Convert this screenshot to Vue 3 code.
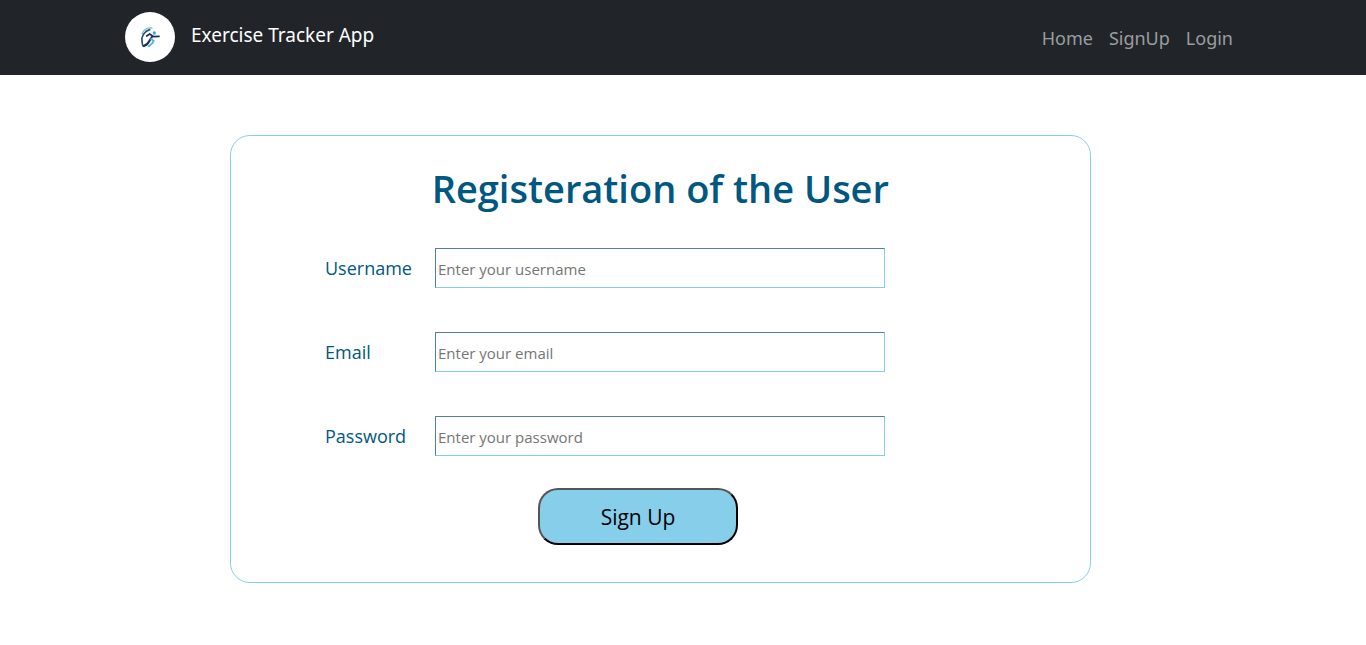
<script setup>
import { reactive } from 'vue'

const links = ['Home', 'SignUp', 'Login']
const fields = [
  { id: 'username', label: 'Username', type: 'text' },
  { id: 'email', label: 'Email', type: 'email' },
  { id: 'password', label: 'Password', type: 'password' },
]
const form = reactive({ username: '', email: '', password: '' })
</script>

<template>
  <header class="navbar">
    <div class="container">
      <a class="brand" href="#">
        <span class="logo">
          <svg viewBox="0 0 60 60" width="20" height="20" fill="none" stroke-linecap="round" aria-hidden="true">
            <path d="M6 20C12 7 23 1 36 3" stroke="#6cc4da" stroke-width="4" />
            <path d="M29 8C14 12 3 28 6 43C7 52 8 57 11 57" stroke="#2f4a75" stroke-width="5" />
            <path d="M11 57C20 54 25 49 28 42L37 28" stroke="#202e58" stroke-width="6" />
            <path d="M20 27L29 21L41 29L57 28" stroke="#202e58" stroke-width="5" />
            <path d="M34 36L41 42C38 50 33 54 26 58" stroke="#55b9d3" stroke-width="6" />
            <circle cx="43" cy="18" r="5" fill="#3fa9c9" />
          </svg>
        </span>
        <span class="brand-name">Exercise Tracker App</span>
      </a>
      <nav class="links">
        <a v-for="link in links" :key="link" href="#">{{ link }}</a>
      </nav>
    </div>
  </header>
  <main class="page">
    <form class="card" @submit.prevent>
      <h1>Registeration of the User</h1>
      <div v-for="field in fields" :key="field.id" class="row">
        <label :for="field.id">{{ field.label }}</label>
        <input :id="field.id" v-model="form[field.id]" :type="field.type" :placeholder="'Enter your ' + field.id" />
      </div>
      <button type="submit">Sign Up</button>
    </form>
  </main>
</template>

<style>
body {
  margin: 0;
  background: #fff;
  font-family: "Segoe UI", "Open Sans", "Noto Sans", sans-serif;
}
</style>

<style scoped>
.navbar {
  background: #212529;
  padding: 12px 0 13px;
}
.container {
  box-sizing: border-box;
  max-width: 1140px;
  margin: 0 auto;
  padding: 0 12px;
  display: flex;
  align-items: center;
  justify-content: space-between;
  font-family: "Segoe UI", "Noto Sans", sans-serif;
}
.brand {
  display: flex;
  align-items: center;
  gap: 16px;
  color: #fff;
  font-size: 19px;
  line-height: 24px;
  text-decoration: none;
}
.brand-name {
  padding-bottom: 4px;
}
.logo {
  display: flex;
  align-items: center;
  justify-content: center;
  width: 50px;
  height: 50px;
  border-radius: 50%;
  background: #fff;
}
.links {
  display: flex;
  gap: 16px;
  padding: 2px 8px 0 0;
}
.links a {
  color: #9b9d9f;
  font-size: 18px;
  line-height: 24px;
  text-decoration: none;
}
.page {
  padding: 60px 0 60px 230px;
}
.card {
  box-sizing: border-box;
  width: 63vw;
  padding: 28px 94px 37px;
  border: 1px solid skyblue;
  border-radius: 20px;
  color: #005780;
}
h1 {
  margin: 0 0 36px;
  text-align: center;
  font-size: 38px;
  font-weight: 600;
  line-height: 48px;
}
.row {
  display: grid;
  grid-template-columns: 110px minmax(0, 450px);
  align-items: center;
  margin-bottom: 44px;
}
label {
  font-size: 18px;
  line-height: 24px;
}
input {
  box-sizing: border-box;
  width: 100%;
  height: 40px;
  padding: 3px 2px 1px;
  border: 1px solid skyblue;
  border-top-color: #4f8296;
  border-left-color: #4f8296;
  background: #fff;
  font-family: inherit;
  font-size: 15px;
}
input::placeholder {
  color: #757575;
  opacity: 1;
}
button {
  display: block;
  box-sizing: border-box;
  width: 200px;
  height: 57px;
  margin: -12px auto 0 213px;
  border: 2px solid #000;
  border-top-color: #555;
  border-left-color: #555;
  border-radius: 20px;
  background: skyblue;
  color: #000;
  font-family: inherit;
  font-size: 21px;
}
</style>
